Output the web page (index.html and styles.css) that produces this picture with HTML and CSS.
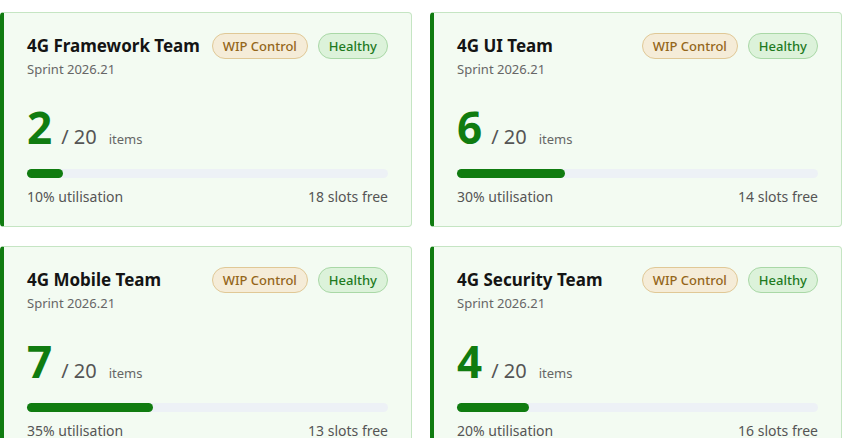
FILE: index.html
```html
<!DOCTYPE html>
<html lang="en">

<head>
    <meta charset="UTF-8">
    <meta name="viewport" content="width=device-width, initial-scale=1.0">
    <title>WIP Board</title>
    <link rel="stylesheet" href="styles.css">
</head>

<body>

    <div class="team-grid">
        <div class="team-card">
            <div class="card-head">
                <div class="team-name">4G Framework Team</div>
                <div class="badges">
                    <span class="badge wip">WIP Control</span>
                    <span class="badge healthy">Healthy</span>
                </div>
            </div>
            <div class="sprint">Sprint 2026.21</div>
            <div class="count-row">
                <span class="count">2</span>
                <span class="limit">/ 20</span>
                <span class="unit">items</span>
            </div>
            <div class="track"><div class="fill" style="width: 10%;"></div></div>
            <div class="card-foot">
                <span>10% utilisation</span>
                <span>18 slots free</span>
            </div>
        </div>

        <div class="team-card">
            <div class="card-head">
                <div class="team-name">4G UI Team</div>
                <div class="badges">
                    <span class="badge wip">WIP Control</span>
                    <span class="badge healthy">Healthy</span>
                </div>
            </div>
            <div class="sprint">Sprint 2026.21</div>
            <div class="count-row">
                <span class="count">6</span>
                <span class="limit">/ 20</span>
                <span class="unit">items</span>
            </div>
            <div class="track"><div class="fill" style="width: 30%;"></div></div>
            <div class="card-foot">
                <span>30% utilisation</span>
                <span>14 slots free</span>
            </div>
        </div>

        <div class="team-card">
            <div class="card-head">
                <div class="team-name">4G Mobile Team</div>
                <div class="badges">
                    <span class="badge wip">WIP Control</span>
                    <span class="badge healthy">Healthy</span>
                </div>
            </div>
            <div class="sprint">Sprint 2026.21</div>
            <div class="count-row">
                <span class="count">7</span>
                <span class="limit">/ 20</span>
                <span class="unit">items</span>
            </div>
            <div class="track"><div class="fill" style="width: 35%;"></div></div>
            <div class="card-foot">
                <span>35% utilisation</span>
                <span>13 slots free</span>
            </div>
        </div>

        <div class="team-card">
            <div class="card-head">
                <div class="team-name">4G Security Team</div>
                <div class="badges">
                    <span class="badge wip">WIP Control</span>
                    <span class="badge healthy">Healthy</span>
                </div>
            </div>
            <div class="sprint">Sprint 2026.21</div>
            <div class="count-row">
                <span class="count">4</span>
                <span class="limit">/ 20</span>
                <span class="unit">items</span>
            </div>
            <div class="track"><div class="fill" style="width: 20%;"></div></div>
            <div class="card-foot">
                <span>20% utilisation</span>
                <span>16 slots free</span>
            </div>
        </div>
    </div>

</body>

</html>
```

FILE: styles.css
```css
body {
    margin: 0;
    background: #ffffff;
    font-family: "Segoe UI", "Noto Sans", sans-serif;
    color: #1a1a1a;
}

.team-grid {
    display: grid;
    grid-template-columns: 1fr 1fr;
    gap: 19px 18px;
    padding: 12px 8px 0 0;
}

.team-card {
    background: #f3fbf2;
    border: 1px solid #c5e5c3;
    border-left: 4px solid #107c10;
    border-radius: 4px;
    padding: 20px 23px 19px 23px;
}

.card-head {
    display: flex;
    justify-content: space-between;
    align-items: center;
}

.team-name {
    font-size: 17px;
    line-height: 22px;
    font-weight: 700;
    color: #141414;
}

.badges {
    display: flex;
    gap: 10px;
}

.badge {
    height: 24px;
    line-height: 24px;
    padding: 0 10px;
    border-radius: 13px;
    font-size: 13px;
    font-weight: 500;
}

.badge.wip {
    background: #f5ecd8;
    border: 1px solid #e0c896;
    color: #94661a;
}

.badge.healthy {
    background: #dcf2da;
    border: 1px solid #a9d8a6;
    color: #1f7a1f;
}

.sprint {
    margin-top: 1px;
    font-size: 13px;
    line-height: 18px;
    color: #666666;
}

.count-row {
    display: flex;
    align-items: baseline;
    margin-top: 27px;
}

.count {
    font-size: 44px;
    line-height: 44px;
    font-weight: 700;
    color: #107c10;
}

.limit {
    margin-left: 9px;
    font-size: 20px;
    color: #555555;
}

.unit {
    margin-left: 12px;
    font-size: 13px;
    color: #666666;
}

.track {
    height: 9px;
    margin-top: 19px;
    border-radius: 5px;
    background: #edf1f6;
}

.fill {
    height: 100%;
    border-radius: 5px;
    background: #107c10;
}

.card-foot {
    display: flex;
    justify-content: space-between;
    margin-top: 9px;
    font-size: 14px;
    line-height: 20px;
    color: #555555;
}
```
